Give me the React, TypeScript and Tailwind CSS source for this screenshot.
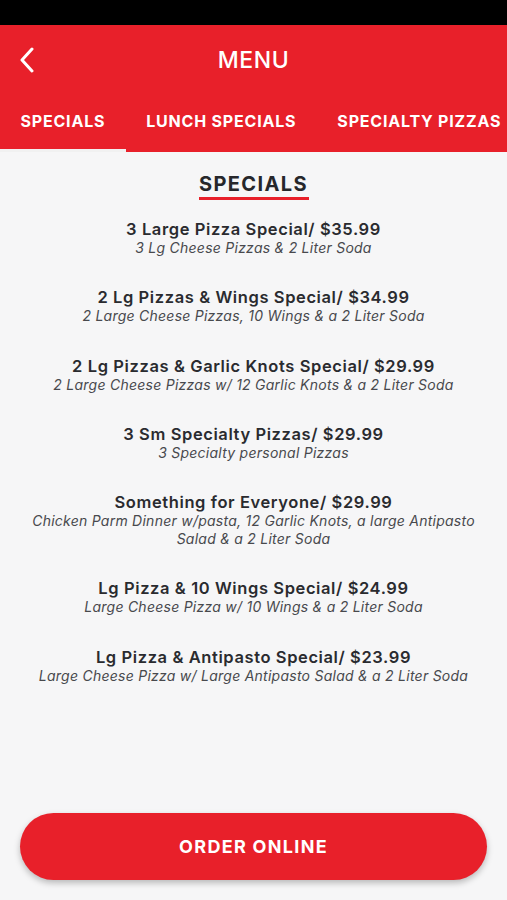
const specials = [
  { title: "3 Large Pizza Special/ $35.99", desc: "3 Lg Cheese Pizzas & 2 Liter Soda" },
  { title: "2 Lg Pizzas & Wings Special/ $34.99", desc: "2 Large Cheese Pizzas, 10 Wings & a 2 Liter Soda" },
  { title: "2 Lg Pizzas & Garlic Knots Special/ $29.99", desc: "2 Large Cheese Pizzas w/ 12 Garlic Knots & a 2 Liter Soda" },
  { title: "3 Sm Specialty Pizzas/ $29.99", desc: "3 Specialty personal Pizzas" },
  {
    title: "Something for Everyone/ $29.99",
    desc: "Chicken Parm Dinner w/pasta, 12 Garlic Knots, a large Antipasto Salad & a 2 Liter Soda",
  },
  { title: "Lg Pizza & 10 Wings Special/ $24.99", desc: "Large Cheese Pizza w/ 10 Wings & a 2 Liter Soda" },
  { title: "Lg Pizza & Antipasto Special/ $23.99", desc: "Large Cheese Pizza w/ Large Antipasto Salad & a 2 Liter Soda" },
];

const tabs = ["SPECIALS", "LUNCH SPECIALS", "SPECIALTY PIZZAS"];

export default function App() {
  return (
    <div className="h-[900px] w-[507px] overflow-hidden flex flex-col bg-[#f6f6f7] font-['Inter','Liberation_Sans',sans-serif]">
      {/* status bar */}
      <div className="h-[25px] bg-black shrink-0" />

      {/* header */}
      <div className="bg-[#e8202a] shrink-0">
        <div className="relative h-[70px] flex items-center justify-center">
          <svg
            className="absolute left-[18px] top-[22px]"
            width="20"
            height="26"
            viewBox="0 0 20 26"
            fill="none"
          >
            <path d="M14 2 L4 13 L14 24" stroke="white" strokeWidth="3" strokeLinecap="round" strokeLinejoin="round" />
          </svg>
          <h1 className="text-white text-[23px] font-medium tracking-wide">MENU</h1>
        </div>
        <div className="flex h-[57px] whitespace-nowrap">
          {tabs.map((t, i) => (
            <div key={t} className="relative flex items-center px-[20.5px] pb-[5px]">
              <span className="text-white text-[16px] font-bold tracking-[0.8px]">{t}</span>
              {i === 0 && <div className="absolute left-0 right-0 bottom-0 h-[3px] bg-[#f1f1f1]" />}
            </div>
          ))}
        </div>
      </div>

      {/* content */}
      <div className="flex-1 flex flex-col items-center px-[30px] pt-[20px]">
        <div className="flex flex-col items-center">
          <h2 className="text-[20px] leading-[24px] font-bold tracking-[1.4px] text-[#26272b]">SPECIALS</h2>
          <div className="h-[3px] w-[110px] bg-[#e8202a] mt-[1px]" />
        </div>
        <div className="flex flex-col gap-[30.3px] mt-[19px] w-full">
          {specials.map((s) => (
            <div key={s.title} className="text-center">
              <div className="text-[16.5px] leading-[20px] font-semibold tracking-[0.6px] text-[#2a2b2f]">{s.title}</div>
              <div className="text-[14px] leading-[18px] italic text-[#48494d] tracking-[0.25px]">{s.desc}</div>
            </div>
          ))}
        </div>
      </div>

      {/* order button */}
      <div className="px-5 pb-5 shrink-0">
        <button className="w-full h-[67px] rounded-full bg-[#e8202a] shadow-[0_3px_6px_rgba(0,0,0,0.25)] text-white text-[18px] font-bold tracking-[1.3px]">
          ORDER ONLINE
        </button>
      </div>
    </div>
  );
}
